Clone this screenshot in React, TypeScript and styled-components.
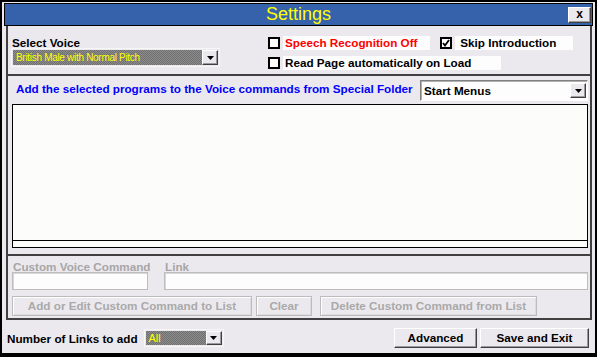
import styled, { createGlobalStyle } from "styled-components";

const GlobalStyle = createGlobalStyle`
  html, body {
    margin: 0;
    padding: 0;
  }
  body {
    font-family: "Liberation Sans", Arial, sans-serif;
  }
  * {
    box-sizing: border-box;
  }
`;

const Window = styled.div`
  width: 597px;
  height: 357px;
  border: 2px solid #000;
  border-bottom-width: 4px;
  background: #ece9ee;
  display: flex;
  flex-direction: column;
  overflow: hidden;
`;

const TitleBar = styled.div`
  margin: 1px 2px 0;
  height: 23px;
  border: 1px solid #000;
  background: #3562aa;
  display: grid;
  grid-template-columns: 1fr auto 1fr;
`;

const Title = styled.div`
  grid-column: 2;
  color: #ffff00;
  font-size: 18px;
  line-height: 21px;
`;

const CloseButton = styled.div`
  grid-column: 3;
  justify-self: end;
  width: 23px;
  height: 16px;
  margin: 3px 1px 0 0;
  background: #ece9ee;
  border-top: 1px solid #fff;
  border-left: 1px solid #fff;
  border-right: 1px solid #404040;
  border-bottom: 1px solid #404040;
  box-shadow: inset -1px -1px #9a9a9a;
  font-size: 12px;
  font-weight: bold;
  line-height: 13px;
  text-align: center;
  color: #000;
`;

const Panels = styled.div`
  margin: 0 3px 0 4px;
  display: flex;
  flex-direction: column;
`;

const Panel = styled.section<{ $h: number; $pad: string }>`
  height: ${(p) => p.$h}px;
  border: 0 solid #404040;
  border-width: 0 2px 2px;
  padding: ${(p) => p.$pad};
  display: flex;
  flex-direction: column;
`;

const VoiceRow = styled.div`
  display: flex;
`;

const VoiceColumn = styled.div`
  width: 209px;
  padding-top: 12px;
  display: flex;
  flex-direction: column;
`;

const BoldLabel = styled.div<{ $color?: string }>`
  font-size: 11.7px;
  font-weight: bold;
  line-height: 10px;
  padding-left: 1px;
  color: ${(p) => p.$color ?? "#000"};
  white-space: nowrap;
`;

const GrayCombo = styled.div<{ $w: number; $h: number; $size: number; $ls: number }>`
  width: ${(p) => p.$w}px;
  height: ${(p) => p.$h}px;
  border: 1px solid #f6f6f6;
  padding: 1px;
  background: repeating-conic-gradient(#707070 0 25%, #8c8c8c 0 50%) 0 0 / 2px 2px;
  background-clip: content-box;
  display: flex;
  align-items: center;
  color: #ffff00;
  font-size: ${(p) => p.$size}px;
  letter-spacing: ${(p) => p.$ls}px;
  white-space: nowrap;
`;

const ComboText = styled.span`
  padding-left: 3px;
`;

const DropButton = styled.span<{ $h: number }>`
  margin-left: auto;
  flex: none;
  width: 16px;
  height: ${(p) => p.$h}px;
  background: #ece9ee;
  border-top: 1px solid #fff;
  border-left: 1px solid #fff;
  border-right: 1px solid #404040;
  border-bottom: 1px solid #404040;
  box-shadow: inset -1px -1px #9a9a9a;
  display: flex;
  align-items: center;
  justify-content: center;
`;

const OptionGrid = styled.div`
  margin-left: 48px;
  padding-top: 10px;
  display: grid;
  grid-template-columns: auto auto;
  justify-content: start;
  row-gap: 6px;
  column-gap: 10px;
`;

const CheckItem = styled.div<{ $span?: boolean }>`
  display: flex;
  align-items: center;
  gap: 3px;
  grid-column: ${(p) => (p.$span ? "1 / span 2" : "auto")};
`;

const Box = styled.span`
  width: 12px;
  height: 12px;
  border: 2px solid #000;
  background: #fff;
  display: flex;
  align-items: center;
  justify-content: center;
`;

const CheckLabel = styled.span<{ $w: number; $color?: string }>`
  width: ${(p) => p.$w}px;
  height: 14px;
  padding-left: 2px;
  background: #fdfdfd;
  font-size: 11.7px;
  font-weight: bold;
  line-height: 14px;
  color: ${(p) => p.$color ?? "#000"};
  white-space: nowrap;
`;

const FolderRow = styled.div`
  display: flex;
  align-items: flex-start;
  height: 21px;
`;

const FolderText = styled.div`
  margin: 2px 0 0 4px;
  font-size: 11.7px;
  font-weight: bold;
  line-height: 13px;
  color: #0000ff;
  white-space: nowrap;
`;

const WhiteCombo = styled.div`
  margin-left: auto;
  width: 168px;
  height: 21px;
  background: #fdfdfd;
  border-top: 1px solid #808080;
  border-left: 1px solid #808080;
  border-right: 1px solid #fff;
  border-bottom: 1px solid #fff;
  box-shadow: inset 1px 1px #b0b0b0;
  padding: 2px 1px 2px 3px;
  display: flex;
  align-items: center;
  font-size: 11.7px;
  font-weight: bold;
  white-space: nowrap;
`;

const ListBox = styled.div`
  margin-top: 3px;
  height: 144px;
  border: 1px solid #000;
  background: #fcfdfb;
  display: flex;
  flex-direction: column;
  justify-content: flex-end;
`;

const ListScroll = styled.div`
  height: 7px;
  border-top: 1px solid #000;
`;

const FieldsRow = styled.div`
  display: flex;
  gap: 16px;
`;

const Field = styled.div<{ $w?: number }>`
  display: flex;
  flex-direction: column;
  width: ${(p) => (p.$w ? `${p.$w}px` : "auto")};
  flex: ${(p) => (p.$w ? "none" : "1")};
`;

const TextInput = styled.div`
  height: 18px;
  background: #fdfdfd;
  border: 1px solid #bdbdbd;
  box-shadow: inset 1px 1px #d8d8d8;
`;

const ButtonsRow = styled.div`
  margin-top: 6px;
  display: flex;
  gap: 4px;
`;

const DisabledButton = styled.div<{ $w: number }>`
  width: ${(p) => p.$w}px;
  height: 20px;
  border: 1px solid #bcbcbc;
  box-shadow: inset 1px 1px #fff, inset -1px -1px #dcdcdc;
  color: #a9a9a9;
  font-size: 11.7px;
  font-weight: bold;
  line-height: 18px;
  text-align: center;
  white-space: nowrap;
`;

const DeleteButton = styled(DisabledButton)`
  margin-left: 4px;
`;

const BottomRow = styled.div`
  height: 33px;
  padding: 3px 6px 0 5px;
  display: flex;
  align-items: center;
`;

const LinksLabel = styled.div`
  font-size: 11.7px;
  font-weight: bold;
  line-height: 13px;
  white-space: nowrap;
  margin-right: 6px;
`;

const Actions = styled.div`
  margin-left: auto;
  display: flex;
  gap: 3px;
`;

const RaisedButton = styled.div<{ $w: number }>`
  width: ${(p) => p.$w}px;
  height: 20px;
  background: #ece9ee;
  border-top: 1px solid #fff;
  border-left: 1px solid #fff;
  border-right: 1px solid #404040;
  border-bottom: 1px solid #404040;
  box-shadow: inset -1px -1px #9a9a9a;
  font-size: 11.7px;
  font-weight: bold;
  line-height: 18px;
  text-align: center;
  white-space: nowrap;
`;

function Arrow() {
  return (
    <svg width="7" height="4" viewBox="0 0 7 4">
      <polygon points="0,0 7,0 3.5,4" fill="#000" />
    </svg>
  );
}

function Tick() {
  return (
    <svg width="8" height="8" viewBox="0 0 8 8">
      <polyline points="1,4 3,6.5 7,1" fill="none" stroke="#000" strokeWidth="1.8" />
    </svg>
  );
}

export default function App() {
  return (
    <>
      <GlobalStyle />
      <Window>
        <TitleBar>
          <Title>Settings</Title>
          <CloseButton>x</CloseButton>
        </TitleBar>

        <Panels>
          <Panel $h={50} $pad="0 0 0 3px">
            <VoiceRow>
              <VoiceColumn>
                <BoldLabel>Select Voice</BoldLabel>
                <GrayCombo $w={209} $h={19} $size={10} $ls={-0.3}>
                  <ComboText>British Male with Normal Pitch</ComboText>
                  <DropButton $h={15}>
                    <Arrow />
                  </DropButton>
                </GrayCombo>
              </VoiceColumn>
              <OptionGrid>
                <CheckItem>
                  <Box />
                  <CheckLabel $w={147} $color="#ff0000">
                    Speech Recognition Off
                  </CheckLabel>
                </CheckItem>
                <CheckItem>
                  <Box>
                    <Tick />
                  </Box>
                  <CheckLabel $w={118}>&nbsp;Skip Introduction</CheckLabel>
                </CheckItem>
                <CheckItem $span>
                  <Box />
                  <CheckLabel $w={218}>Read Page automatically on Load</CheckLabel>
                </CheckItem>
              </OptionGrid>
            </VoiceRow>
          </Panel>

          <Panel $h={180} $pad="4px 2px 0 4px">
            <FolderRow>
              <FolderText>
                Add the selected programs to the Voice commands from Special Folder
              </FolderText>
              <WhiteCombo>
                Start Menus
                <DropButton $h={15}>
                  <Arrow />
                </DropButton>
              </WhiteCombo>
            </FolderRow>
            <ListBox>
              <ListScroll />
            </ListBox>
          </Panel>

          <Panel $h={64} $pad="6px 2px 0 4px">
            <FieldsRow>
              <Field $w={136}>
                <BoldLabel $color="#a6a6a6">Custom Voice Command</BoldLabel>
                <TextInput />
              </Field>
              <Field>
                <BoldLabel $color="#a6a6a6">Link</BoldLabel>
                <TextInput />
              </Field>
            </FieldsRow>
            <ButtonsRow>
              <DisabledButton $w={240}>Add or Edit Custom Command to List</DisabledButton>
              <DisabledButton $w={56}>Clear</DisabledButton>
              <DeleteButton $w={217}>Delete Custom Command from List</DeleteButton>
            </ButtonsRow>
          </Panel>
        </Panels>

        <BottomRow>
          <LinksLabel>Number of Links to add</LinksLabel>
          <GrayCombo $w={80} $h={18} $size={11} $ls={0}>
            <ComboText>All</ComboText>
            <DropButton $h={14}>
              <Arrow />
            </DropButton>
          </GrayCombo>
          <Actions>
            <RaisedButton $w={83}>Advanced</RaisedButton>
            <RaisedButton $w={109}>Save and Exit</RaisedButton>
          </Actions>
        </BottomRow>
      </Window>
    </>
  );
}
